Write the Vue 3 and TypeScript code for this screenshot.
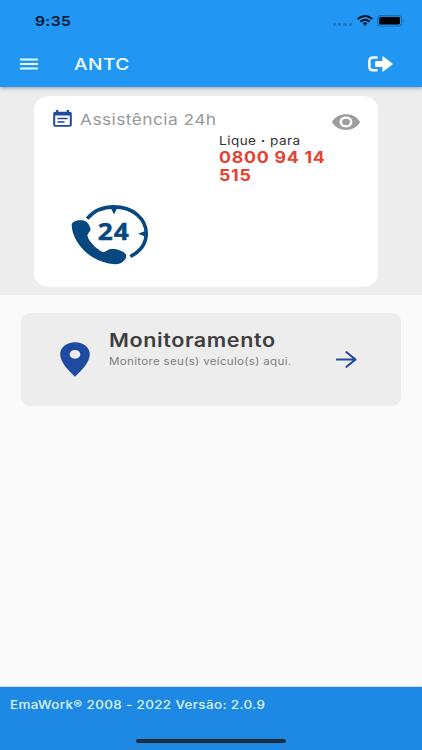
<script setup lang="ts">
const title: string = 'ANTC'
const phone: string[] = ['0800 94 14', '515']
const version: string = 'EmaWork® 2008 - 2022 Versão: 2.0.9'
const signalDots: number[] = [0, 1, 2, 3]
</script>

<template>
  <div class="screen">
    <header class="header">
      <div class="status">
        <span class="t clock">9:35</span>
        <div class="status-icons">
          <div class="signal"><i v-for="d in signalDots" :key="d" class="dot"></i></div>
          <svg class="wifi" viewBox="0 0 16 11" preserveAspectRatio="none">
            <g fill="none" stroke="#04121f" stroke-width="2">
              <path d="M.8 4.1Q8-2.1 15.2 4.1" />
              <path d="M3.4 6.7Q8 2.7 12.6 6.7" />
            </g>
            <path d="M5.6 8.3Q8 6.4 10.4 8.3L8 10.8z" fill="#04121f" />
          </svg>
          <svg class="battery" viewBox="0 0 28 12">
            <rect x=".6" y=".6" width="24" height="10.4" rx="3" fill="none" stroke="#176cb4" stroke-width="1.1" />
            <rect x="2.2" y="2" width="20.8" height="7.6" rx="1.6" fill="#000" />
            <path d="M26 4Q27.6 5.8 26 7.6z" fill="#125c9c" />
          </svg>
        </div>
      </div>
      <div class="toolbar">
        <svg class="menu" viewBox="0 0 18 12"><path d="M0 1.5h18M0 6h18M0 10.5h18" stroke="#e2fbff" stroke-width="1.9" /></svg>
        <h1 class="t title">{{ title }}</h1>
        <svg class="logout" viewBox="0 0 25 16">
          <path d="M9.5 1.5H5Q1.4 1.5 1.4 4.8V11Q1.4 14.3 5 14.3H9.5" fill="none" stroke="#fff" stroke-width="2.4" />
          <path d="M7.2 5.6Q7.2 4.9 8 4.9H14.4V1Q14.4-.2 15.6.7L24.1 7.2Q25 8 24.1 8.8L15.6 15.3Q14.4 16.2 14.4 15V11H8Q7.2 11 7.2 10.3z" fill="#fff" />
        </svg>
      </div>
    </header>

    <section class="assist-area">
      <div class="assist">
        <div class="assist-head">
          <svg class="calendar" viewBox="0 0 19 17" preserveAspectRatio="none">
            <path d="M2.3 1.8H3V0H5.3V1.8H13.7V0H16V1.8H16.7Q18.8 1.8 18.8 3.6V15Q18.8 16.8 16.7 16.8H2.3Q.2 16.8 .2 15V3.6Q.2 1.8 2.3 1.8zM2.2 5.6V15.1H16.8V5.6z" fill="#1e4a9f" fill-rule="evenodd" />
            <path d="M4.4 8.5H14.6M4.4 11.9H11.5" stroke="#1e4a9f" stroke-width="1.5" />
          </svg>
          <h2 class="t assist-title">Assistência 24h</h2>
          <svg class="eye" viewBox="0 0 28 16" preserveAspectRatio="none">
            <path d="M0 8C5-2.5 23-2.5 28 8C23 18.5 5 18.5 0 8zM14 2.6C10.3 2.6 7.6 5 7.6 8S10.3 13.4 14 13.4S20.4 11 20.4 8S17.7 2.6 14 2.6z" fill="#9d9d9d" fill-rule="evenodd" />
            <ellipse cx="14" cy="8" rx="3.9" ry="3.3" fill="#9d9d9d" />
          </svg>
        </div>
        <div class="contact">
          <p class="t call">Lique <b>·</b> para</p>
          <p v-for="line in phone" :key="line" class="t number">{{ line }}</p>
        </div>
        <svg class="phone24" viewBox="0 0 78 60">
          <path d="M16.2 13.6C23 5.6 32.8 1.9 43 1.9C61.5 1.9 75.2 13.6 75.2 28.5C75.2 38.3 69.5 46.3 59.3 51.5" fill="none" stroke="#06487f" stroke-width="3.6" />
          <path d="M39.5 2.5H46.5L43 9.4zM75.5 25.5V32L67 28.7z" fill="#06487f" />
          <path d="M.7 20C.7 16.5 6.5 14.6 11.5 15.3C16.8 16.2 18.2 20 19.5 23.5C20.3 26.2 16.8 27.6 16.5 30C16 34 24 43.6 31 46.7C34.5 48.2 36.4 44.3 40 44C44.5 43.5 52.5 45.5 54.8 49.3C56.5 52.5 53 57 49 58.5C43 60.5 32 57.5 24 53.5C11 47 .7 32 .7 20z" fill="#06487f" />
          <text x="22.9" y="34.7" transform="scale(1.17 1)" class="hours">24</text>
        </svg>
      </div>
    </section>

    <main class="content">
      <div class="monitor">
        <svg class="pin" viewBox="0 0 30 35" preserveAspectRatio="none">
          <path d="M15 .3C6.4 .3 .2 5.4 .2 12.3C.2 20.5 8.5 28.5 15 34.8C21.5 28.5 29.8 20.5 29.8 12.3C29.8 5.4 23.6 .3 15 .3zM15 7.9C18.1 7.9 20.3 9.9 20.3 12.3S18.1 16.7 15 16.7S9.7 14.7 9.7 12.3S11.9 7.9 15 7.9z" fill="#1e4a9f" fill-rule="evenodd" />
        </svg>
        <div class="monitor-text">
          <h2 class="t monitor-title">Monitoramento</h2>
          <p class="t monitor-sub">Monitore seu(s) veículo(s) aqui.</p>
        </div>
        <svg class="arrow" viewBox="0 0 21 17"><path d="M.8 8.5H19M10.5 1.2L19.5 8.5L10.5 15.8" fill="none" stroke="#1e4a9f" stroke-width="2.1" stroke-linecap="round" stroke-linejoin="round" /></svg>
      </div>
    </main>

    <footer class="footer">
      <p class="t version">{{ version }}</p>
      <div class="home-bar"></div>
    </footer>
  </div>
</template>

<style>
body {
  margin: 0;
}
</style>

<style scoped>
* {
  box-sizing: border-box;
}
.screen {
  width: 422px;
  height: 750px;
  display: flex;
  flex-direction: column;
  background: #fafafa;
  overflow: hidden;
  font-family: Inter, "Liberation Sans", sans-serif;
}
h1, h2, p {
  margin: 0;
}
svg {
  display: block;
  flex: none;
}
.t {
  display: block;
  width: max-content;
  white-space: nowrap;
  transform-origin: 0 50%;
  transform: scaleX(1.16);
}
.header {
  position: relative;
  height: 87px;
  flex: none;
  background: #2196f3;
  box-shadow: 0 1px 4px rgba(0, 0, 0, 0.35);
}
.status {
  height: 42px;
  display: flex;
  justify-content: space-between;
  padding: 0 17px 0 35px;
}
.clock {
  margin-top: 11px;
  font-size: 13.5px;
  line-height: 20px;
  font-weight: 600;
  letter-spacing: 0.3px;
  color: #04121f;
}
.status-icons {
  display: flex;
  align-items: flex-start;
  padding-top: 15px;
}
.signal {
  display: flex;
  gap: 2px;
  margin: 7.5px 5px 0 0;
}
.dot {
  width: 3.3px;
  height: 3px;
  border-radius: 50%;
  background: #1c77c3;
}
.wifi {
  width: 16px;
  height: 11px;
  margin-right: 4px;
}
.battery {
  width: 28px;
  height: 12px;
}
.toolbar {
  height: 44px;
  display: flex;
  align-items: center;
  padding: 0 29px 0 20px;
}
.menu {
  width: 18px;
  height: 12px;
}
.title {
  margin-left: 36px;
  font-size: 16.5px;
  font-weight: 500;
  letter-spacing: 0.4px;
  color: #f3fdff;
}
.logout {
  width: 25px;
  height: 16px;
  margin-left: auto;
}
.assist-area {
  height: 208px;
  flex: none;
  padding: 9px 44px 8px 34px;
  background: #ededed;
}
.assist {
  height: 191px;
  border-radius: 16px / 13px;
  background: #fff;
}
.assist-head {
  height: 37px;
  display: flex;
  align-items: flex-start;
  padding: 14px 18px 0 19px;
}
.calendar {
  width: 19px;
  height: 17px;
}
.assist-title {
  margin-left: 8px;
  font-size: 15px;
  line-height: 20px;
  font-weight: 400;
  letter-spacing: 0.35px;
  color: #999;
}
.eye {
  width: 28px;
  height: 16px;
  margin: 4px 0 0 auto;
}
.contact {
  padding-left: 185px;
}
.call {
  font-size: 11.7px;
  line-height: 16px;
  letter-spacing: 0.4px;
  color: #333;
}
.number {
  font-size: 15.3px;
  line-height: 17.5px;
  font-weight: 700;
  letter-spacing: 0.65px;
  color: #e8402f;
}
.phone24 {
  width: 78px;
  height: 60px;
  margin: 21px 0 0 37px;
}
.hours {
  font-family: "Open Sans", sans-serif;
  font-size: 22.5px;
  font-weight: 700;
  letter-spacing: 0.8px;
  fill: #06487f;
  stroke: #06487f;
  stroke-width: 0.4px;
}
.content {
  flex: 1;
  padding: 17.6px 21px 0;
}
.monitor {
  height: 93px;
  display: flex;
  align-items: flex-start;
  padding: 0 44px 0 39px;
  border-radius: 10px / 8px;
  background: #ededed;
}
.pin {
  width: 30px;
  height: 35px;
  margin-top: 29px;
}
.monitor-text {
  padding: 16px 0 0 19px;
}
.monitor-title {
  font-size: 18.6px;
  line-height: 23px;
  font-weight: 600;
  letter-spacing: 0.5px;
  color: #3f3f3f;
}
.monitor-sub {
  margin-top: 2px;
  font-size: 10px;
  line-height: 14px;
  letter-spacing: 0.25px;
  color: #808080;
}
.arrow {
  width: 21px;
  height: 17px;
  margin: 38px 0 0 auto;
}
.footer {
  height: 63px;
  flex: none;
  display: flex;
  flex-direction: column;
  padding: 9.6px 10px 0;
  background: #1e88e5;
  box-shadow: 0 -1px 1px rgba(0, 0, 0, 0.12);
}
.version {
  font-size: 11.6px;
  line-height: 16px;
  font-weight: 500;
  letter-spacing: 0.3px;
  color: #dcf5ff;
}
.home-bar {
  width: 150px;
  height: 4px;
  margin: 26.4px 0 0 126px;
  border-radius: 3px;
  background: #1d2d3d;
}
</style>
